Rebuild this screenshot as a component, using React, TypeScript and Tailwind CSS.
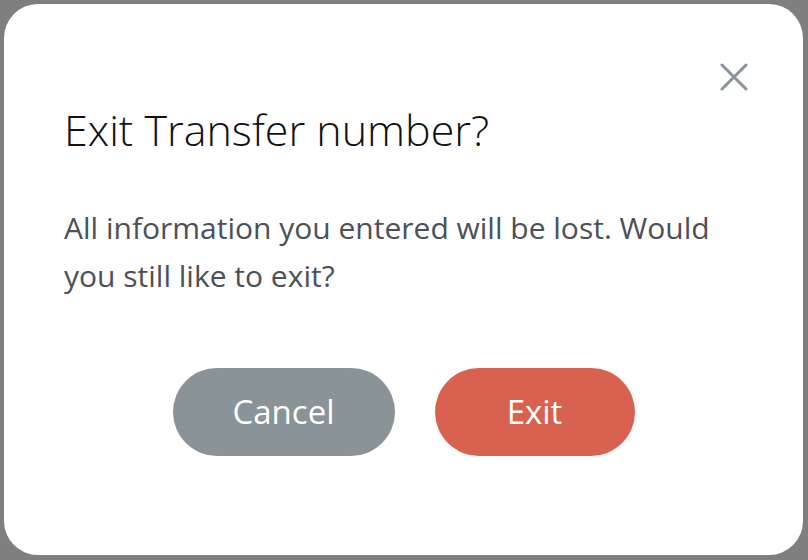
const CloseIcon = () => (
    <svg width="28" height="28" viewBox="0 0 28 28" fill="none">
        <path
            d="M2 2L26 26M26 2L2 26"
            stroke="#8a9399"
            strokeWidth="3"
            strokeLinecap="round"
        />
    </svg>
);

const App = () => {
    return (
        <div className="w-[808px] h-[560px] bg-[#7f7f7f] p-[4px] pr-[5px] pb-[5px] overflow-hidden">
            <div
                className="w-full h-full bg-white rounded-[34px] flex flex-col px-[60px] pt-[59px]"
                style={{ fontFamily: '"Open Sans", "Noto Sans", sans-serif' }}
            >
                <div className="flex justify-end mr-[-5px]">
                    <button className="w-[28px] h-[28px] flex items-center justify-center">
                        <CloseIcon />
                    </button>
                </div>

                <h1 className="mt-[13px] text-[43px] leading-[52px] font-light text-[#111111]">
                    Exit Transfer number?
                </h1>

                <p className="mt-[48px] text-[30px] leading-[48px] text-[#4b5157]">
                    All information you entered will be lost. Would you still like to exit?
                </p>

                <div className="mt-[68px] flex justify-center gap-[40px]">
                    <button className="w-[222px] h-[88px] rounded-full bg-[#8a9398] text-white text-[33px] font-medium">
                        Cancel
                    </button>
                    <button className="w-[200px] h-[88px] rounded-full bg-[#d96150] text-white text-[33px] font-medium">
                        Exit
                    </button>
                </div>
            </div>
        </div>
    );
};

export default App;
